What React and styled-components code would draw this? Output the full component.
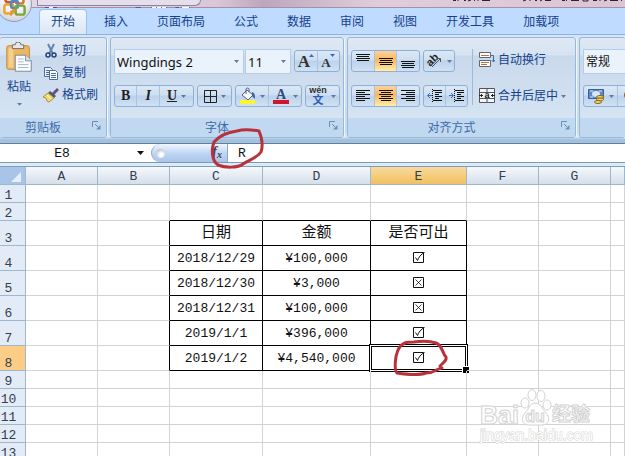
import styled, { createGlobalStyle, css } from "styled-components";

const GlobalStyle = createGlobalStyle`
    * {
        box-sizing: border-box;
    }
    body {
        margin: 0;
        font-family: "Noto Sans", "Noto Sans CJK SC", sans-serif;
        font-size: 12px;
        color: #15428b;
    }
    button, input, select {
        font: inherit;
        color: inherit;
        margin: 0;
        padding: 0;
        border: none;
        outline: none;
        background: none;
    }
`

const Window = styled.div`
    position: relative;
    height: 100vh;
    overflow: hidden;
    display: flex;
    flex-direction: column;
    background-color: white;
`

/* title bar */
const TitleBar = styled.header`
    height: 8px;
    flex: none;
    display: flex;
    justify-content: space-between;
    padding-left: 37px;
    background: linear-gradient(90deg, #e3d9e6, #dac6d6 35%, #bda6bd 42%, #e0cdd9 60%, #dcc5d2);
    border-bottom: 1px solid #a78fa6;
`
const QuickAccess = styled.div`
    width: 164px;
    height: 6px;
    border: 1px solid #8b84a8;
    border-top: none;
    border-radius: 0 0 12px 0;
    background-color: #e6deea;
`
const Orb = styled.button`
    position: absolute;
    left: -4px;
    top: -14px;
    z-index: 2;
    width: 36px;
    height: 36px;
    border-radius: 50%;
    border: 1px solid #8d9cb8;
    background: radial-gradient(circle at 50% 30%, #ffffff 30%, #e4e6ec 62%, #b9c0cf);
    display: flex;
    align-items: center;
    justify-content: center;
`

/* ribbon */
const Tabs = styled.nav`
    flex: none;
    height: 26px;
    display: flex;
    gap: 5px;
    padding: 1px 0 0 39px;
    background-color: #bfdbff;
`
const Tab = styled.button`
    flex: none;
    height: 25px;
    padding: 0 11px;
    line-height: 24px;
    border: 1px solid transparent;
    border-bottom: none;
    ${props => props.$active && css`
        border-color: #9cc0ea;
        border-radius: 4px 4px 0 0;
        background: linear-gradient(#f2f8ff, #dbe7f5);
    `}
`
const Ribbon = styled.section`
    flex: none;
    display: flex;
    gap: 3px;
    padding: 2px 0 5px;
    border-top: 1px solid #8db2e3;
    border-bottom: 1px solid #5f7f9f;
    background: linear-gradient(#d6e5f5, #c8dcf0 90%, #d8eafc 94%, #a3c0dc 97%);
`
const Group = styled.div`
    flex: ${props => props.$width ? `none` : `1`};
    width: ${props => props.$width || "auto"};
    min-width: 0;
    overflow: hidden;
    border: 1px solid #98b8d8;
    border-left-width: ${props => props.$first ? "0" : "1px"};
    border-right-width: ${props => props.$width ? "1px" : "0"};
    border-radius: 3px;
    box-shadow: 1px 0 0 #eef5fc;
    background: linear-gradient(#dfe9f5, #d7e3f2 17%, #c9d9ec 18%, #d9e7f5);
`
const GroupBody = styled.div`
    height: 80px;
    padding: 11px 3px 12px;
    display: flex;
`
const GroupLabel = styled.div`
    height: 19px;
    line-height: 19px;
    position: relative;
    text-align: center;
    padding-right: 20px;
    color: #3e6aaa;
    background-color: #c1d9f0;
`
const Launcher = styled.button`
    position: absolute;
    right: 5px;
    top: 3px;
    width: 9px;
    height: 9px;
    display: flex;
`
const Rows = styled.div`
    flex: ${props => props.$fill ? "1" : "none"};
    min-width: 0;
    display: flex;
    flex-direction: column;
    gap: 11px;
`
const ToolRow = styled.div`
    height: ${props => props.$tall ? "25px" : "21px"};
    display: flex;
    gap: ${props => props.$gap || "3px"};
`
const ComboBox = styled.label`
    position: relative;
    width: ${props => props.$width};
    flex: none;
    height: 25px;
    display: flex;
    align-items: center;
    border: 1px solid #b4cde8;
    background-color: #eaf2fb;
    color: #111;
    svg {
        position: absolute;
        right: 4px;
        pointer-events: none;
    }
`
const Select = styled.select`
    appearance: none;
    width: 100%;
    height: 23px;
    padding-left: 2px;
    font-size: ${props => props.$small ? "12px" : "13px"};
`
const Spacer = styled.span`
    width: 1px;
`
const ButtonSet = styled.div`
    flex: none;
    width: ${props => props.$width};
    height: 22px;
    margin-top: ${props => props.$drop ? "1px" : "0"};
    display: flex;
    border: 1px solid #8fb0d4;
    border-radius: 3px;
    background: linear-gradient(#dbe8f6, #cddff2 45%, #bcd2ea 50%, #cfe1f4);
    svg {
        flex: none;
        overflow: visible;
    }
`
const Tool = styled.button`
    flex: ${props => props.$grow || 1};
    min-width: 0;
    display: flex;
    align-items: center;
    justify-content: center;
    gap: 4px;
    color: #222;
    & + & {
        border-left: 1px solid #a9c4e0;
    }
    ${props => props.$on && css`
        background: linear-gradient(#f8d3a0, #fbb65c 45%, #fdc56f 60%, #fff0a8);
    `}
`
const Glyph = styled.span`
    font-family: "Liberation Serif", serif;
    font-weight: bold;
    font-size: 14px;
    font-style: ${props => props.$italic ? "italic" : "normal"};
    text-decoration: ${props => props.$underline ? "underline" : "none"};
`
const Divider = styled.div`
    width: 1px;
    height: 56px;
    margin: 0 6px 0 4px;
    background-color: #9dbbd9;
`
const TextTool = styled.button`
    flex: none;
    height: 22px;
    display: flex;
    align-items: center;
    gap: 3px;
    white-space: nowrap;
    line-height: 18px;
`
const PasteTool = styled.button`
    width: 32px;
    margin: -7px 8px 0 0;
    display: flex;
    flex-direction: column;
    align-items: center;
    line-height: 18px;
    svg + span {
        margin: 6px 0 7px;
    }
`
const ClipTools = styled.div`
    display: flex;
    flex-direction: column;
    margin-top: -9px;
`

/* formula bar */
const FormulaBar = styled.div`
    position: relative;
    flex: none;
    height: 19px;
    display: flex;
    border-bottom: 1px solid #7d9bb5;
    font-family: "Liberation Mono", monospace;
    font-size: 13px;
    color: #111;
`
const NameBox = styled.div`
    width: 151px;
    display: flex;
    align-items: center;
    background-color: white;
`
const NameInput = styled.input`
    width: 124px;
    text-align: center;
`
const NameArrow = styled.button`
    width: 27px;
    padding-left: 6px;
    display: flex;
    align-items: center;
    justify-content: center;
`
const FxPanel = styled.div`
    width: 77px;
    display: flex;
    align-items: center;
    justify-content: space-between;
    padding: 0 5px 0 4px;
    border: 1px solid #8fa9c4;
    border-width: 0 1px;
    border-radius: 10px 0 0 10px;
    background: linear-gradient(#f0f6fd, #bdd4f3 55%, #a9c5ea);
`
const Knob = styled.span`
    width: 9px;
    height: 9px;
    border-radius: 50%;
    background: radial-gradient(circle at 60% 65%, #ffffff 20%, #9aa9ba);
`
const FxButton = styled.button`
    font: italic bold 14px/16px "Liberation Serif", serif;
    color: #444;
    padding-bottom: 2px;
    sub {
        font-size: 10px;
        line-height: 0;
        vertical-align: -2px;
    }
`
const FormulaInput = styled.input`
    flex: 1;
    min-width: 0;
    padding-left: 10px;
`
const Strip = styled.div`
    flex: none;
    height: 4px;
    background-color: #dcebf8;
    border-bottom: 1px solid #7f9db9;
`

/* sheet */
const Sheet = styled.table`
    width: 100%;
    table-layout: fixed;
    border-collapse: separate;
    border-spacing: 0;
    font-family: "Liberation Mono", "Noto Sans CJK SC", monospace;
    font-size: 13px;
    line-height: 15px;
    color: #111;
`
const Col = styled.col`
    width: ${props => props.$width};
`
const ColHead = styled.th`
    height: 18px;
    padding: 2px 0 0;
    font-weight: normal;
    color: #333f50;
    border-right: 1px solid #9eb6ce;
    border-bottom: 1px solid #9eb6ce;
    background: ${props => props.$on
        ? "linear-gradient(#f9d99f, #f1c15f)"
        : "linear-gradient(#f6f9fc, #d5deea)"};
`
const Corner = styled(ColHead)`
    background: #a9c4e9;
    svg {
        display: block;
        margin: 1px 4px 0 auto;
    }
`
const RowHead = styled.th`
    height: ${props => props.$tall ? "25px" : "18px"};
    padding: 0 8px 0 0;
    vertical-align: bottom;
    line-height: 13px;
    font-weight: normal;
    color: #333f50;
    border-right: 1px solid #9eb6ce;
    border-bottom: 1px solid #9eb6ce;
    background-color: ${props => props.$on ? "#fccd86" : "#e3ebf6"};
`
const Cell = styled.td`
    position: relative;
    padding: 0;
    text-align: center;
    white-space: nowrap;
    font-size: ${props => props.$heading ? "15px" : "13px"};
    border-right: 1px solid ${props => props.$blackRight ? "#000" : "#d0d3d8"};
    border-bottom: 1px solid ${props => props.$blackBottom ? "#000" : "#d0d3d8"};
    > svg {
        display: block;
        margin: 0 auto;
    }
`
const Selection = styled.div`
    position: absolute;
    inset: -1px;
    border: 1px solid white;
    box-shadow: 0 0 0 1px #000, inset 0 0 0 1px #000;
    &::after {
        content: "";
        position: absolute;
        right: -3px;
        bottom: -3px;
        width: 6px;
        height: 6px;
        background-color: #000;
        border: 1px solid white;
        border-width: 1px 0 0 1px;
    }
`
const PenMark = styled.svg`
    position: absolute;
    left: ${props => props.$left};
    top: ${props => props.$top};
    z-index: 3;
    fill: none;
    stroke: #b8323b;
    stroke-width: 3;
    stroke-linecap: round;
    stroke-linejoin: round;
    pointer-events: none;
`
const PenSpot = styled.div`
    position: absolute;
    left: 50%;
    top: 50%;
`

/* watermark */
const Watermark = styled.div`
    position: absolute;
    right: 33px;
    bottom: 13px;
    width: 112px;
    color: white;
    -webkit-text-stroke: 1px #d2d2d2;
    font-family: "Liberation Sans", "Noto Sans CJK SC", sans-serif;
`
const Brand = styled.div`
    display: flex;
    align-items: flex-end;
    font-size: 25px;
    font-weight: bold;
    line-height: 24px;
    svg {
        flex: none;
    }
`
const BrandZh = styled.span`
    font-size: 19px;
`
const Domain = styled.div`
    font-size: 14px;
    line-height: 16px;
    paint-order: stroke fill;
`

const Arrow = ({ color = "#5b7ba3", big }) => (
    <svg width={big ? 7 : 5} height={big ? 4 : 3} viewBox="0 0 6 3" preserveAspectRatio="none" aria-hidden="true">
        <path d="M0 0h6L3 3z" fill={color} />
    </svg>
)

const LaunchIcon = () => (
    <svg width="9" height="9" viewBox="0 0 9 9" fill="none" stroke="#6c8eb6">
        <path d="M0.500 6V0.500H6" />
        <path d="M3 3l3 3" />
        <path d="M8.500 4v4.500H4z" fill="#6c8eb6" stroke="none" />
    </svg>
)

const OfficeLogo = () => (
    <svg width="27" height="27" viewBox="0 0 24 24" fill="none" strokeWidth="2.200">
        <rect x="4" y="2" width="8" height="8" rx="2" stroke="#d9512c" />
        <rect x="13" y="4" width="7" height="7" rx="2" stroke="#e0722d" />
        <rect x="3" y="12" width="8" height="8" rx="2" stroke="#e9a82b" />
        <rect x="9" y="9" width="6" height="6" rx="1" stroke="#5486c9" />
        <rect x="13" y="13" width="8" height="8" rx="2" stroke="#78a83c" />
        <path d="M9 22v-4h5" stroke="#e88c2c" strokeWidth="1.500" />
    </svg>
)

const QuickIcons = () => (
    <svg width="162" height="6" viewBox="0 0 162 6">
        <path d="M7 0h12v2H7z" fill="#50519c" />
        <path d="M11 0h4v1h-4z" fill="#fff" />
        <path d="M36 0h4l-2 2z" fill="#6a82b5" />
        <path d="M98 0h5v1l-3 2-3-2z" fill="#4560a8" />
        <path d="M113.500 0v2.500h15V0M118.500 0v2.500M123.500 0v2.500" stroke="#5d6c92" fill="#fff" />
        <path d="M137 0h4v3h-2z" fill="#4560a8" />
        <path d="M143.500 0v2.500h8V0" stroke="#5d6c92" fill="#fff" />
    </svg>
)

const TitleMarks = () => (
    <svg width="172" height="4" viewBox="0 0 172 4" stroke="#2b2530" fill="none">
        <path d="M0 0.500h3M5 0v1M11 0.500h2M15 1l3-1M22 0l-1 1M25 0v1M29 0.500h8M70 1l3-1M77 0v1M82 0.500h2M87 1l2-1M92 0.500h6M109 0.500h3M114 0l-1 1M118 0.500h8M130 0v1h5V0M140 0.500h4M147 0v1M151 1l3-1M157 0.500h8M168 0l1 1" />
    </svg>
)

const PasteIcon = () => (
    <svg width="28" height="32" viewBox="0 0 28 32">
        <rect x="1" y="4" width="24" height="25" rx="2" fill="#edb762" stroke="#b98a45" />
        <path d="M3 6h5v21H3z" fill="#f7ce8a" />
        <path d="M7 3h3a3 3 0 0 1 6 0h3v4H7z" fill="#e8e8e8" stroke="#6b6b6b" />
        <path d="M10 14h11l6 6v11H10z" fill="#fff" stroke="#7084a6" />
        <path d="M21 14v6h6" fill="#dde6f3" stroke="#7084a6" />
        <path d="M13 18h6M13 21h6M13 24h11M13 27h11" stroke="#9db0cc" />
    </svg>
)

const CutIcon = () => (
    <svg width="16" height="16" viewBox="0 0 16 16" fill="none">
        <path d="M5 1l5 10M11 1L6 11" stroke="#6584ad" strokeWidth="2" />
        <circle cx="5" cy="12" r="2" stroke="#22427c" strokeWidth="1.500" />
        <circle cx="11" cy="12" r="2" stroke="#22427c" strokeWidth="1.500" />
    </svg>
)

const CopyIcon = () => (
    <svg width="16" height="16" viewBox="0 0 16 16" stroke="#4c6da0">
        <path d="M1.500 2.500h6l2 2v7h-8z" fill="#eef4fc" />
        <path d="M3 5.500h4M3 7.500h4M3 9.500h3" />
        <path d="M6.500 5.500h6l2 2v7h-8z" fill="#fff" />
        <path d="M8 8.500h5M8 10.500h5M8 12.500h5" />
    </svg>
)

const BrushIcon = () => (
    <svg width="16" height="16" viewBox="0 0 16 16">
        <path d="M9 6l5-5 2 2-5 5z" fill="#6c4a84" />
        <path d="M7 4l6 5-2 2-6-5z" fill="#4c5b6b" />
        <path d="M5 6l6 5-5 4-2-1-1-3-3-1z" fill="#f5dc72" stroke="#b0903b" />
        <path d="M4 8l4 4" stroke="#fff6c2" />
    </svg>
)

const BorderIcon = () => (
    <svg width="13" height="13" viewBox="0 0 13 13" fill="none" stroke="#222">
        <path d="M0.500 0.500h12v12h-12zM6.500 0v13M0 6.500h13" />
    </svg>
)

const FillIcon = () => (
    <svg width="16" height="16" viewBox="0 0 16 16">
        <path d="M7 2l6 5-5 5-6-5z" fill="#f4f7fb" stroke="#52627a" />
        <path d="M6 6V1.500a1.500 1.500 0 0 1 3 0V4" fill="none" stroke="#52627a" />
        <path d="M12 4c3 1 3 4 3 7l-3-3z" fill="#365fa5" />
        <path d="M0 12h15v4H0z" fill="#fbf52a" />
    </svg>
)

const FontColorIcon = () => (
    <svg width="16" height="16" viewBox="0 0 16 16">
        <text x="8" y="11" textAnchor="middle" fontFamily="Liberation Serif" fontWeight="bold" fontSize="14" fill="#2f4d82">A</text>
        <path d="M0 12h16v4H0z" fill="#d3152b" />
    </svg>
)

const FontSizeIcon = ({ up }) => (
    <svg width="18" height="18" viewBox="0 0 18 18">
        <text x="7" y="15" textAnchor="middle" fontFamily="Liberation Serif" fontWeight="bold" fontSize={up ? 17 : 13} fill="#333">A</text>
        <path d={up ? "M12 5h5l-2.500-3z" : "M11 2h5l-2.500 3z"} fill="#3b6bb5" />
    </svg>
)

const WenIcon = () => (
    <svg width="18" height="18" viewBox="0 0 18 18" textAnchor="middle">
        <text x="9" y="6" fontFamily="Liberation Sans" fontSize="9" fontWeight="bold" fill="#333">wén</text>
        <text x="9" y="17" fontFamily="Noto Sans CJK SC" fontSize="11" fontWeight="bold" fill="#2f5fb3">文</text>
    </svg>
)

/* each line is [from, to] */
const LinesIcon = ({ lines, top = 0 }) => (
    <svg width="14" height="16" viewBox="0 0 14 16" stroke="#111">
        {lines.map(([from, to], i) => (
            <path key={i} d={`M${from} ${top + i * 2 + 1.5}H${to}`} />
        ))}
    </svg>
)

const IndentIcon = ({ out }) => (
    <svg width="15" height="14" viewBox="0 0 15 14" fill="none" stroke="#111">
        <path d="M6 1.500h9M8 3.500h7M8 5.500h4M8 7.500h7M8 9.500h4M6 11.500h9" />
        <path d="M5.500 0v14" strokeDasharray="1 1" />
        <path d={out ? "M5 6.500H1M3 4L0.500 6.500L3 9" : "M0 6.500h4M2 4l2.500 2.500L2 9"} stroke="#3b6bb5" />
    </svg>
)

const AngleIcon = () => (
    <svg width="17" height="16" viewBox="0 0 17 16">
        <text x="1" y="12" transform="rotate(-45 5 9)" fontFamily="Liberation Sans" fontWeight="bold" fontSize="11" fill="#222">ab</text>
        <path d="M6 14l8-8M14.500 9V5.500H11" fill="none" stroke="#555" />
    </svg>
)

const WrapIcon = () => (
    <svg width="16" height="16" viewBox="0 0 16 16" fill="none">
        <path d="M0.500 0.500h11v5h-11zM0.500 8.500h11v6h-11z" fill="#fff" stroke="#666" />
        <path d="M2 3.500h8M2 10.500h8M2 12.500h6" stroke="#b2703c" />
        <path d="M12 3.500h2.500v6M12.500 8l2 2 1.500-2" stroke="#3b6bb5" />
    </svg>
)

const MergeIcon = () => (
    <svg width="16" height="16" viewBox="0 0 16 16">
        <path d="M0.500 0.500h15v14h-15zM0.500 4.500h15M0.500 10.500h15M8 0v4M8 11v4" fill="#f2f6fb" stroke="#555" />
        <path d="M0 7.500h4M12 7.500h4M2.500 6v3M13.500 6v3" stroke="#222" />
        <text x="8" y="10" textAnchor="middle" fontFamily="Liberation Sans" fontWeight="bold" fontSize="9" fill="#111">a</text>
    </svg>
)

const MoneyIcon = () => (
    <svg width="17" height="16" viewBox="0 0 17 16">
        <path d="M0.500 1.500h15v9h-15z" fill="#5e89c4" stroke="#3a5f9a" />
        <ellipse cx="8" cy="6" rx="4" ry="3" fill="#d8e6f7" />
        <path d="M2 3h3M11 3h3M2 9h3" stroke="#d8e6f7" />
        <ellipse cx="12" cy="9" rx="3.500" ry="1.500" fill="#f2d268" stroke="#8a6a1d" />
        <ellipse cx="12" cy="11.500" rx="3.500" ry="1.500" fill="#f2d268" stroke="#8a6a1d" />
        <ellipse cx="10" cy="14" rx="3.500" ry="1.500" fill="#f2d268" stroke="#8a6a1d" />
    </svg>
)

const Mark = ({ ok }) => (
    <svg width="12" height="12" viewBox="0 0 12 12" fill="none" stroke="#111" role="img" aria-label={ok ? "☑" : "☒"}>
        <path d="M0.500 0.500h10v10h-10z" />
        {ok
            ? <path d="M2.500 5.500l2 3C5.500 5.500 8 2 11.500 0.500" />
            : <path d="M2.500 2.500l6 6M8.500 2.500l-6 6" strokeWidth="0.800" />}
    </svg>
)

const Paw = () => (
    <svg width="33" height="38" viewBox="0 0 33 38" fill="#fff" stroke="#d2d2d2">
        <ellipse cx="6" cy="14" rx="4" ry="5" />
        <ellipse cx="13" cy="6" rx="4" ry="5.500" />
        <ellipse cx="22" cy="7" rx="4" ry="5.500" />
        <ellipse cx="28" cy="16" rx="4" ry="5" />
        <path d="M16 14c6 0 7 6 11 10s4 12-4 12c-4 0-9 0-13 0-8 0-8-8-4-12s5-10 10-10z" />
        <text x="16" y="33" textAnchor="middle" fontSize="16" fontWeight="bold">du</text>
    </svg>
)

const tabs = ["开始", "插入", "页面布局", "公式", "数据", "审阅", "视图", "开发工具", "加载项"]

const columns = [
    { name: "A", width: "72px" },
    { name: "B", width: "72px" },
    { name: "C", width: "93px" },
    { name: "D", width: "108px" },
    { name: "E", width: "96px" },
    { name: "F", width: "72px" },
    { name: "G", width: "72px" },
    { name: "", width: "auto" },
]

const records = {
    3: ["日期", "金额", "是否可出"],
    4: ["2018/12/29", "¥100,000", true],
    5: ["2018/12/30", "¥3,000", false],
    6: ["2018/12/31", "¥100,000", false],
    7: ["2019/1/1", "¥396,000", true],
    8: ["2019/1/2", "¥4,540,000", true],
}

const rowNumbers = Array.from({ length: 13 }, (_, i) => i + 1)

const center = [[0, 14], [2, 12], [0, 14], [2, 12], [0, 14], [2, 12]]
const left = [[0, 14], [0, 9], [0, 14], [0, 9], [0, 14], [0, 9]]
const right = [[0, 14], [5, 14], [0, 14], [5, 14], [0, 14], [5, 14]]
const full = [[0, 14], [1, 13], [0, 14], [1, 13]]

const Clipboard = () => (
    <Group $first $width="107px">
        <GroupBody>
            <PasteTool>
                <PasteIcon />
                <span>粘贴</span>
                <Arrow />
            </PasteTool>
            <ClipTools>
                <TextTool><CutIcon />剪切</TextTool>
                <TextTool><CopyIcon />复制</TextTool>
                <TextTool><BrushIcon />格式刷</TextTool>
            </ClipTools>
        </GroupBody>
        <GroupLabel>剪贴板<Launcher aria-label="剪贴板"><LaunchIcon /></Launcher></GroupLabel>
    </Group>
)

const FontGroup = () => (
    <Group $width="234px">
        <GroupBody>
            <Rows>
                <ToolRow $tall $gap="1px">
                    <ComboBox $width="130px">
                        <Select aria-label="字体"><option>Wingdings 2</option></Select>
                        <Arrow />
                    </ComboBox>
                    <ComboBox $width="46px">
                        <Select aria-label="字号"><option>11</option></Select>
                        <Arrow />
                    </ComboBox>
                    <Spacer />
                    <ButtonSet $width="46px" $drop>
                        <Tool aria-label="增大字号"><FontSizeIcon up /></Tool>
                        <Tool aria-label="减小字号"><FontSizeIcon /></Tool>
                    </ButtonSet>
                </ToolRow>
                <ToolRow>
                    <ButtonSet $width="80px">
                        <Tool $grow={22}><Glyph>B</Glyph></Tool>
                        <Tool $grow={22}><Glyph $italic>I</Glyph></Tool>
                        <Tool $grow={34}><Glyph $underline>U</Glyph><Arrow /></Tool>
                    </ButtonSet>
                    <ButtonSet $width="35px">
                        <Tool aria-label="边框"><BorderIcon /><Arrow /></Tool>
                    </ButtonSet>
                    <ButtonSet $width="67px">
                        <Tool aria-label="填充颜色"><FillIcon /><Arrow /></Tool>
                        <Tool aria-label="字体颜色"><FontColorIcon /><Arrow /></Tool>
                    </ButtonSet>
                    <ButtonSet $width="35px">
                        <Tool aria-label="拼音"><WenIcon /><Arrow /></Tool>
                    </ButtonSet>
                </ToolRow>
            </Rows>
        </GroupBody>
        <GroupLabel>字体<Launcher aria-label="字体设置"><LaunchIcon /></Launcher></GroupLabel>
    </Group>
)

const AlignGroup = () => (
    <Group $width="229px">
        <GroupBody>
            <Rows>
                <ToolRow $tall>
                    <ButtonSet $width="69px" $drop>
                        <Tool aria-label="顶端对齐"><LinesIcon lines={full} top={0} /></Tool>
                        <Tool $on aria-label="垂直居中"><LinesIcon lines={full} top={4} /></Tool>
                        <Tool aria-label="底端对齐"><LinesIcon lines={full} top={7} /></Tool>
                    </ButtonSet>
                    <ButtonSet $width="32px" $drop>
                        <Tool aria-label="方向"><AngleIcon /><Arrow /></Tool>
                    </ButtonSet>
                </ToolRow>
                <ToolRow>
                    <ButtonSet $width="69px">
                        <Tool aria-label="左对齐"><LinesIcon lines={left} top={1} /></Tool>
                        <Tool $on aria-label="居中"><LinesIcon lines={center} top={1} /></Tool>
                        <Tool aria-label="右对齐"><LinesIcon lines={right} top={1} /></Tool>
                    </ButtonSet>
                    <ButtonSet $width="45px">
                        <Tool aria-label="减少缩进"><IndentIcon out /></Tool>
                        <Tool aria-label="增加缩进"><IndentIcon /></Tool>
                    </ButtonSet>
                </ToolRow>
            </Rows>
            <Divider />
            <Rows>
                <ToolRow $tall>
                    <TextTool><WrapIcon />自动换行</TextTool>
                </ToolRow>
                <ToolRow>
                    <TextTool><MergeIcon />合并后居中 <Arrow /></TextTool>
                </ToolRow>
            </Rows>
        </GroupBody>
        <GroupLabel>对齐方式<Launcher aria-label="对齐设置"><LaunchIcon /></Launcher></GroupLabel>
    </Group>
)

const NumberGroup = () => (
    <Group>
        <GroupBody>
            <Rows $fill>
                <ComboBox $width="100px">
                    <Select $small aria-label="数字格式"><option>常规</option></Select>
                </ComboBox>
                <ToolRow>
                    <ButtonSet $width="80px">
                        <Tool $grow={34} aria-label="会计数字格式"><MoneyIcon /><Arrow /></Tool>
                        <Tool $grow={22}>%</Tool>
                        <Tool $grow={22}>,</Tool>
                    </ButtonSet>
                </ToolRow>
            </Rows>
        </GroupBody>
        <GroupLabel />
    </Group>
)

const SheetRow = ({ n }) => {
    const record = records[n]
    return (
        <tr>
            <RowHead scope="row" $tall={!!record} $on={n === 8}>{n}</RowHead>
            {columns.map((col, i) => {
                const inTable = i >= 2 && i <= 4
                const value = record && inTable ? record[i - 2] : null
                return (
                    <Cell
                        key={i}
                        $heading={n === 3}
                        $blackRight={!!record && i >= 1 && i <= 4}
                        $blackBottom={inTable && n >= 2 && n <= 8}
                    >
                        {typeof value === "boolean" ? <Mark ok={value} /> : value}
                        {n === 8 && col.name === "E" && (
                            <>
                                <Selection />
                                <PenSpot>
                                    <PenMark $left="-29px" $top="-21px" width="60" height="42">
                                        <path d="M52 31C45 32 45 36 36 36C28 39 14 37 7 36C4 32 5 20 8 13C12 5 17 5 24 5C32 4 40 4 46 6C53 9 52 16 56 20C57 23 54 25 50 29" />
                                    </PenMark>
                                </PenSpot>
                            </>
                        )}
                    </Cell>
                )
            })}
        </tr>
    )
}

const App = () => {
    return (
        <Window>
            <GlobalStyle />
            <Orb aria-label="Office"><OfficeLogo /></Orb>
            <TitleBar>
                <QuickAccess><QuickIcons /></QuickAccess>
                <TitleMarks />
            </TitleBar>
            <Tabs>
                {tabs.map((name, i) => (
                    <Tab key={name} $active={i === 0}>{name}</Tab>
                ))}
            </Tabs>
            <Ribbon>
                <Clipboard />
                <FontGroup />
                <AlignGroup />
                <NumberGroup />
            </Ribbon>
            <FormulaBar>
                <NameBox>
                    <NameInput aria-label="名称框" defaultValue="E8" />
                    <NameArrow aria-label="名称列表"><Arrow big color="#111" /></NameArrow>
                </NameBox>
                <FxPanel>
                    <Knob />
                    <FxButton>f<sub>x</sub></FxButton>
                </FxPanel>
                <FormulaInput aria-label="编辑栏" defaultValue="R" />
                <PenMark $left="206px" $top="-19px" width="62" height="48">
                    <path d="M8 17C14 10 24 7 31 6C38 4 47 5 53 6C56 13 57 21 55 27C50 34 42 35 37 39C32 43 19 43 12 40C6 36 5 25 8 17" />
                </PenMark>
            </FormulaBar>
            <Strip />
            <Sheet>
                <colgroup>
                    <Col $width="26px" />
                    {columns.map((col, i) => <Col key={i} $width={col.width} />)}
                </colgroup>
                <thead>
                    <tr>
                        <Corner as="td">
                            <svg width="10" height="10" viewBox="0 0 10 10"><path d="M10 0v10H0z" fill="#e6effa" /></svg>
                        </Corner>
                        {columns.map((col, i) => (
                            <ColHead key={i} scope="col" $on={col.name === "E"}>{col.name}</ColHead>
                        ))}
                    </tr>
                </thead>
                <tbody>
                    {rowNumbers.map(n => <SheetRow key={n} n={n} />)}
                </tbody>
            </Sheet>
            <Watermark>
                <Brand>Bai<Paw /><BrandZh>经验</BrandZh></Brand>
                <Domain>jingyan.baidu.com</Domain>
            </Watermark>
        </Window>
    )
}

export default App
